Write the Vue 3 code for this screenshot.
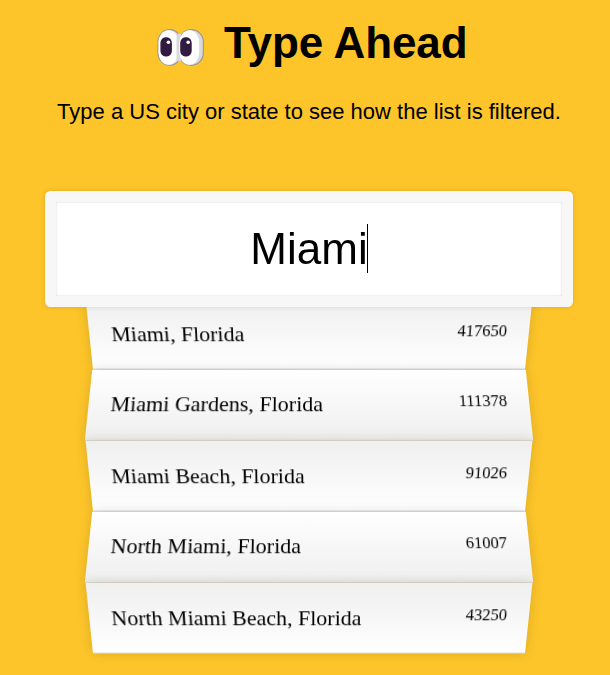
<script setup>
import { ref } from 'vue'

const query = ref('Miami')
const places = [
  { name: 'Miami, Florida', population: '417650' },
  { name: 'Miami Gardens, Florida', population: '111378' },
  { name: 'Miami Beach, Florida', population: '91026' },
  { name: 'North Miami, Florida', population: '61007' },
  { name: 'North Miami Beach, Florida', population: '43250' }
]
</script>

<template>
  <main class="page">
    <h1 class="heading">
      <svg class="eyes" viewBox="0 0 48 39" aria-hidden="true">
        <g fill="#d9d9d9" stroke="#999" stroke-width="1.2">
          <rect x="1" y="1.7" width="23.4" height="35.6" rx="11.7" ry="12.5" />
          <rect x="22" y="1.7" width="24.4" height="35.6" rx="12" ry="12.5" />
        </g>
        <rect x="1.5" y="2.2" width="20" height="34.6" rx="10" ry="12" fill="#fff" />
        <rect x="19.5" y="5.5" width="5" height="28" rx="2.5" fill="#d9d9d9" />
        <rect x="22.4" y="2.2" width="19.8" height="34.6" rx="9.9" ry="12" fill="#fff" />
        <g fill="#321b41">
          <rect x="3.4" y="9.3" width="11.5" height="19.2" rx="5" ry="5.8" />
          <rect x="23.2" y="9.3" width="11.5" height="19.2" rx="5" ry="5.8" />
        </g>
        <g fill="#fff">
          <circle cx="11.4" cy="14.2" r="1.8" />
          <circle cx="31.2" cy="14.2" r="1.8" />
        </g>
      </svg>
      <span class="title">Type Ahead</span>
    </h1>
    <p class="intro">Type a US city or state to see how the list is filtered.</p>

    <form class="search-form" @submit.prevent>
      <div class="field">
        <input v-model="query" class="search" type="text" aria-label="City or state" />
        <span class="caret"></span>
      </div>
      <ul class="suggestions">
        <li v-for="place in places" :key="place.name">
          <span class="name">{{ place.name }}</span>
          <span class="population">{{ place.population }}</span>
        </li>
      </ul>
    </form>
  </main>
</template>

<style>
html,
body {
  background: #fdc529;
  overflow: hidden;
}
</style>

<style scoped>
.page {
  box-sizing: border-box;
  height: 675px;
  padding: 18px 0 0 8px;
  color: #000;
  font-family: "Liberation Sans", Arial, sans-serif;
}

.heading {
  display: flex;
  justify-content: center;
  align-items: center;
  gap: 19.5px;
  height: 50px;
  margin: 0;
  padding-left: 6px;
  font-size: 44px;
  line-height: 50px;
}

.eyes {
  width: 48px;
  height: 39px;
  margin-top: 9px;
}

.title {
  letter-spacing: -0.12px;
}

.intro {
  margin: 31px 0 0;
  font-size: 22px;
  line-height: 25px;
  text-align: center;
}

.search-form {
  width: 440px;
  margin: 67px auto 0;
}

.field {
  position: relative;
  z-index: 2;
  width: 528px;
  margin-left: -44px;
}

.search {
  display: block;
  box-sizing: border-box;
  width: 100%;
  height: 116px;
  margin: 0;
  padding: 20px 22px;
  border: 11px solid #f7f7f7;
  border-radius: 5.5px;
  outline: 0;
  background: #fff;
  box-shadow: 0 0 5.5px rgba(0, 0, 0, 0.12), inset 0 0 2.2px rgba(0, 0, 0, 0.19);
  color: #000;
  font: 44px "Liberation Sans", Arial, sans-serif;
  text-align: center;
}

.caret {
  position: absolute;
  top: 33px;
  left: 322px;
  width: 1px;
  height: 49px;
  background: #000;
}

.suggestions {
  margin: -11px 0 0;
  padding: 0;
  list-style: none;
}

.suggestions li {
  display: flex;
  box-sizing: border-box;
  justify-content: space-between;
  height: 71px;
  padding: 22px;
  border-bottom: 1px solid #d8d8d8;
  box-shadow: 0 0 11px rgba(0, 0, 0, 0.14);
  font-family: "Liberation Serif", "Times New Roman", serif;
  font-size: 22px;
  line-height: 25px;
}

.suggestions li:nth-child(even) {
  background: linear-gradient(to bottom, #fff 0%, #efefef 100%);
  transform: perspective(110px) rotateX(3deg) translateY(2.2px) scale(1.001);
}

.suggestions li:nth-child(odd) {
  background: linear-gradient(to top, #fff 0%, #efefef 100%);
  transform: perspective(110px) rotateX(-3deg) translateY(3.3px);
}

.population {
  font-size: 16.5px;
  line-height: 19px;
}
</style>
